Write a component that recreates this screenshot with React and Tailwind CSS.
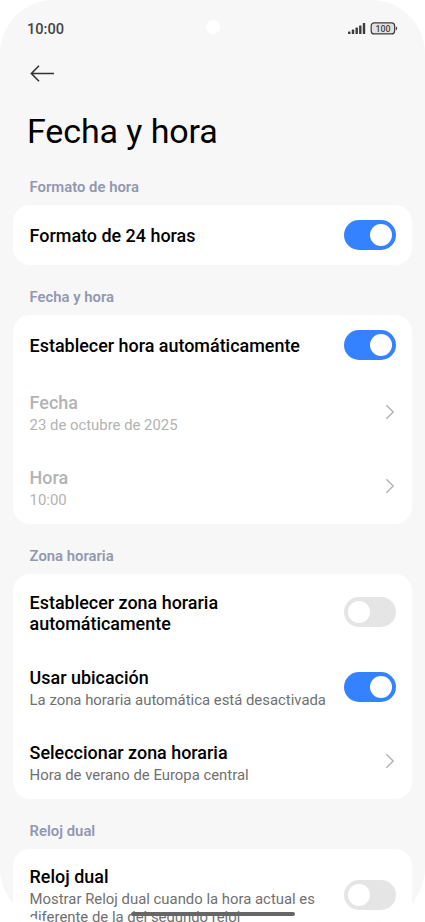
function StatusBar() {
  return (
    <div className="relative h-14 flex items-center justify-between pl-[27px] pr-[26px] pt-px">
      <span className="text-[14.6px] leading-5 font-medium text-[#444]">10:00</span>
      <span className="absolute left-[206px] top-5 size-[14px] rounded-full bg-white" />
      <svg className="-mt-px" width="51" height="14" viewBox="0 0 51 14" fill="none">
        <g fill="#3c3c3c">
          <rect x="0" y="10.4" width="2.5" height="2.7" rx="0.6" />
          <rect x="3.8" y="8.6" width="2.4" height="4.5" rx="0.6" />
          <rect x="7.5" y="6.6" width="2.4" height="6.5" rx="0.6" />
          <rect x="11.1" y="4.4" width="2.4" height="8.7" rx="0.6" />
          <rect x="14.8" y="2" width="2.4" height="11.1" rx="0.6" />
        </g>
        <rect x="23.2" y="1.9" width="23.4" height="11" rx="3" fill="#e2e2e2" stroke="#3c3c3c" strokeWidth="1.2" />
        <path d="M47.8 5.6c1 .3 1.4.9 1.4 1.8s-.4 1.5-1.4 1.8z" fill="#3c3c3c" />
        <text x="34.9" y="10.6" textAnchor="middle" fontSize="8.8" fontWeight="500" fill="#444">100</text>
      </svg>
    </div>
  );
}

function Toggle({ on }) {
  return (
    <span
      className={`flex h-[30px] w-[52px] shrink-0 items-center rounded-full px-1 ${
        on ? "justify-end bg-[#3482ff]" : "justify-start bg-[#e5e5e5]"
      }`}
    >
      <span className="size-[22px] rounded-full bg-white" />
    </span>
  );
}

function Chevron() {
  return (
    <svg className="mr-[0.8px] shrink-0" width="10" height="16" viewBox="0 0 10 16" fill="none">
      <path d="M1.3 1.2 8.2 8l-6.9 6.8" stroke="#b2b2b2" strokeWidth="1.4" />
    </svg>
  );
}

function Row({ title, sub, disabled, short, children }) {
  return (
    <div className={`flex items-center justify-between ${short ? "h-[59px]" : "h-[74.75px]"}`}>
      <div className={`flex flex-col whitespace-pre-line ${sub ? "pt-[3.3px]" : short ? "pt-px" : "pt-[2.6px]"}`}>
        <span className={`text-[17.93px] leading-[21px] font-medium ${disabled ? "text-[#b3b3b3]" : "text-black"}`}>
          {title}
        </span>
        {sub && (
          <span className={`mt-[4px] text-[14.88px] leading-[17.5px] ${disabled ? "text-[#b3b3b3]" : "text-[#707070]"}`}>
            {sub}
          </span>
        )}
      </div>
      {children}
    </div>
  );
}

function Section({ label, children }) {
  return (
    <section className="mb-[23.1px]">
      <h2 className="pl-[17px] text-[14.85px] leading-[18px] font-semibold text-[#9398b1]">{label}</h2>
      <div className="mt-[8.9px] rounded-[17px] bg-white pt-[0.6px] pl-[17px] pr-[16.2px]">{children}</div>
    </section>
  );
}

export default function App() {
  return (
    <div className="h-[922px] w-[425px] bg-white font-['Roboto',sans-serif]">
      <div className="relative h-full overflow-hidden rounded-[54px] bg-[#f7f7f7]">
        <StatusBar />

        {/* Back */}
        <div className="h-[49px] pl-[30px] pt-[9px]">
          <svg width="25" height="17" viewBox="0 0 25 17" fill="none" stroke="#333" strokeWidth="1.6">
            <path d="M9 .8 1.4 8.5 9 16.2M1.4 8.5H24" />
          </svg>
        </div>

        <h1 className="pl-[27px] text-[34px] leading-[52px] tracking-[-0.1px] text-black">Fecha y hora</h1>

        <main className="mt-[21.3px] pl-[12.6px] pr-[12.6px]">
          <Section label="Formato de hora">
            <Row title="Formato de 24 horas" short>
              <Toggle on />
            </Row>
          </Section>

          <Section label="Fecha y hora">
            <Row title="Establecer hora automáticamente" short>
              <Toggle on />
            </Row>
            <Row title="Fecha" sub="23 de octubre de 2025" disabled>
              <Chevron />
            </Row>
            <Row title="Hora" sub="10:00" disabled>
              <Chevron />
            </Row>
          </Section>

          <Section label="Zona horaria">
            <Row title={"Establecer zona horaria\nautomáticamente"}>
              <Toggle />
            </Row>
            <Row title="Usar ubicación" sub="La zona horaria automática está desactivada">
              <Toggle on />
            </Row>
            <Row title="Seleccionar zona horaria" sub="Hora de verano de Europa central">
              <Chevron />
            </Row>
          </Section>

          <Section label="Reloj dual">
            <div className="pt-[8.2px]">
              <Row title="Reloj dual" sub={"Mostrar Reloj dual cuando la hora actual es\ndiferente de la del segundo reloj"}>
                <Toggle />
              </Row>
            </div>
          </Section>
        </main>

        {/* Gesture bar */}
        <span className="absolute left-[130.5px] top-[911.5px] h-[4px] w-[164px] rounded-full bg-[#666]" />
      </div>
    </div>
  );
}
